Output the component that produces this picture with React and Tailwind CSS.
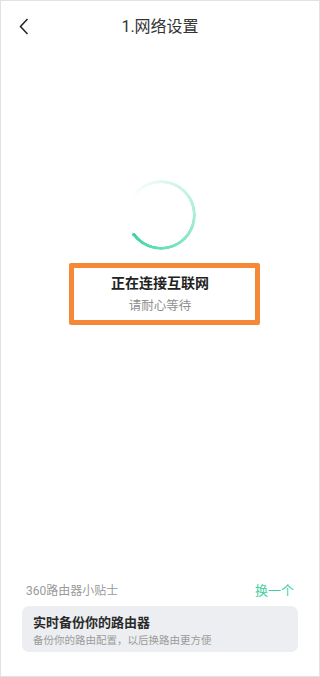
function Spinner() {
  return (
    <div className="relative h-[70px] w-[70px]">
      <div className="h-full w-full rounded-full bg-[conic-gradient(from_300deg,rgba(61,212,164,0)_0deg,rgba(61,212,164,0.3)_110deg,rgba(61,212,164,0.65)_210deg,rgba(61,212,164,1)_295deg,transparent_295.5deg)] [-webkit-mask-image:radial-gradient(closest-side,transparent_calc(100%-3.5px),black_calc(100%-3px))] [mask-image:radial-gradient(closest-side,transparent_calc(100%-3.5px),black_calc(100%-3px))]" />
      <div className="absolute left-[6px] top-[52.7px] h-[3px] w-[3px] rounded-full bg-[#3dd4a4]" />
    </div>
  );
}

export default function App() {
  return (
    <div
      className="box-border flex h-[677px] w-[320px] flex-col border border-[#e2e2e2] bg-white"
      style={{ fontFamily: "Roboto, 'Noto Sans CJK SC', sans-serif" }}
    >
      <div className="grid h-[51px] grid-cols-[48px_1fr_48px] items-center">
        <div className="flex justify-center">
          <svg width="10" height="17" viewBox="0 0 10 17" className="ml-[-2px]">
            <path d="M8.5 1 L1.5 8.5 L8.5 16" stroke="#222" strokeWidth="1.5" fill="none" />
          </svg>
        </div>
        <div className="text-center text-[16px] text-[#333]">1.网络设置</div>
        <div />
      </div>

      <div className="mt-[128px] flex justify-center pl-[1px]">
        <Spinner />
      </div>

      <div className="ml-[68px] mt-[13px] box-border h-[62px] w-[191px] rounded-[2px] border-[5px] border-[#f58935] pr-[9px] pt-[5px] text-center">
        <div className="text-[14px] font-bold leading-[20px] text-[#222]">正在连接互联网</div>
        <div className="mt-[4px] text-[12.5px] leading-[18px] text-[#8f8f8f]">请耐心等待</div>
      </div>

      <div className="flex-1" />

      <div className="px-[21px] pb-[24px]">
        <div className="flex items-center justify-between pl-[4px] pr-[4px]">
          <span className="text-[12px] leading-[16px] text-[#9a9a9a]">360路由器小贴士</span>
          <span className="text-[13px] leading-[16px] text-[#42cf9f]">换一个</span>
        </div>
        <div className="mt-[7px] rounded-[7px] bg-[#eceef1] pb-[4px] pl-[11px] pt-[8px]">
          <div className="text-[13px] font-bold leading-[18px] text-[#2a2a2a]">实时备份你的路由器</div>
          <div className="mt-[1px] text-[10.5px] leading-[15px] text-[#9b9b9b]">备份你的路由配置，以后换路由更方便</div>
        </div>
      </div>
    </div>
  );
}
